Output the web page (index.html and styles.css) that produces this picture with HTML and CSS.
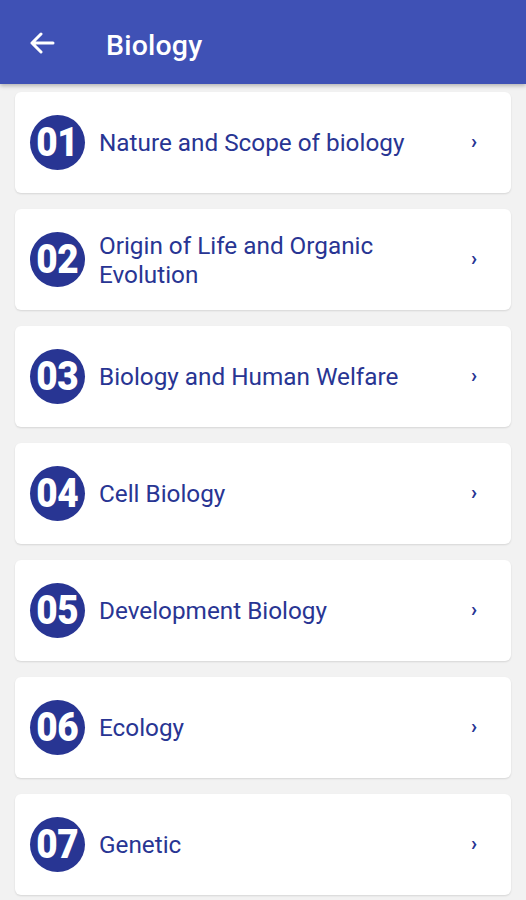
FILE: index.html
```html
<!DOCTYPE html>
<html>
<head>
<meta charset="utf-8">
<link rel="stylesheet" href="styles.css">
</head>
<body>
<header class="appbar">
  <svg class="back" width="26" height="22" viewBox="0 0 26 22"><path d="M24 11H3M12 2L3 11l9 9" fill="none" stroke="#fff" stroke-width="3" stroke-linecap="round" stroke-linejoin="round"/></svg>
  <h1 class="title">Biology</h1>
</header>
<main class="list">
  <div class="card"><div class="num"><span>01</span></div><div class="label">Nature and Scope of biology</div><div class="chev">›</div></div>
  <div class="card"><div class="num"><span>02</span></div><div class="label">Origin of Life and Organic Evolution</div><div class="chev">›</div></div>
  <div class="card"><div class="num"><span>03</span></div><div class="label">Biology and Human Welfare</div><div class="chev">›</div></div>
  <div class="card"><div class="num"><span>04</span></div><div class="label">Cell Biology</div><div class="chev">›</div></div>
  <div class="card"><div class="num"><span>05</span></div><div class="label">Development Biology</div><div class="chev">›</div></div>
  <div class="card"><div class="num"><span>06</span></div><div class="label">Ecology</div><div class="chev">›</div></div>
  <div class="card"><div class="num"><span>07</span></div><div class="label">Genetic</div><div class="chev">›</div></div>
</main>
</body>
</html>
```
FILE: styles.css
```css
* { box-sizing: border-box; }
html, body { margin: 0; padding: 0; }
body {
  background: #f2f2f2;
  font-family: Roboto, "Noto Sans", sans-serif;
  width: 526px;
  height: 900px;
  overflow: hidden;
}
.appbar {
  height: 84px;
  background: #3f51b5;
  display: flex;
  align-items: center;
  padding-left: 29px;
  padding-top: 6px;
  box-shadow: 0 2px 4px rgba(0,0,0,0.25);
  position: relative;
  z-index: 1;
}
.back { display: block; margin-top: -4px; }
.title {
  margin: 0 0 0 51px;
  color: #fff;
  font-size: 28.5px;
  font-weight: 500;
  letter-spacing: 0.2px;
}
.list {
  padding: 8px 15px 0 15px;
  display: flex;
  flex-direction: column;
  gap: 16px;
}
.card {
  height: 101px;
  background: #fff;
  border-radius: 6px;
  box-shadow: 0 1px 2px rgba(0,0,0,0.12);
  display: flex;
  align-items: center;
  padding-left: 15px;
  padding-right: 34px;
}
.num {
  width: 55px;
  height: 55px;
  border-radius: 50%;
  background: #283593;
  flex: none;
  display: flex;
  align-items: center;
  justify-content: center;
}
.num span {
  color: #fff;
  font-size: 41px;
  font-weight: 900;
  letter-spacing: -0.5px;
  transform: scaleX(0.9);
  line-height: 1;
}
.label {
  flex: 1;
  margin-left: 14px;
  color: #283593;
  font-size: 24.3px;
  font-weight: 400;
  line-height: 29px;
  padding-right: 30px;
}
.chev {
  color: #283593;
  font-size: 20px;
  font-weight: 700;
  line-height: 1;
  margin-top: -3px;
}
```
